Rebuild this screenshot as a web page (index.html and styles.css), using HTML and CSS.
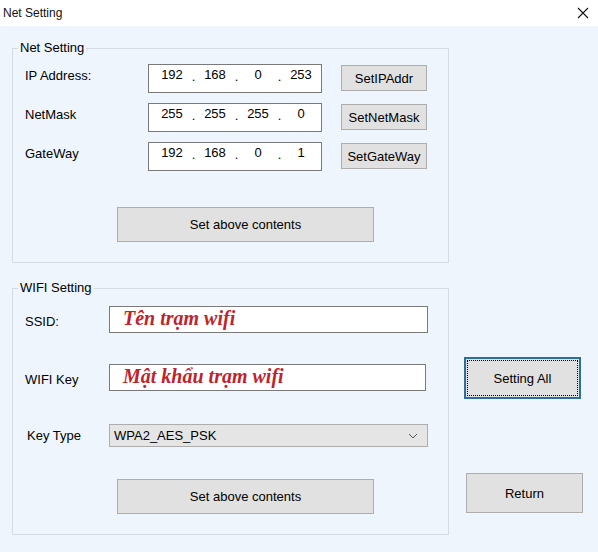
FILE: index.html
```html
<!DOCTYPE html>
<html lang="vi">
<head>
    <meta charset="UTF-8">
    <title>Net Setting</title>
    <link rel="stylesheet" href="styles.css">
</head>
<body>
    <div class="titlebar">
        <span class="title">Net Setting</span>
        <svg class="close" width="12" height="12" viewBox="0 0 12 12">
            <path d="M1 1 L11 11 M11 1 L1 11" stroke="#111" stroke-width="1.1" fill="none"/>
        </svg>
    </div>

    <div class="content">
        <fieldset class="group net">
            <legend>Net Setting</legend>

            <div class="ip-row">
                <div class="label">IP Address:</div>
                <div class="ip-box">
                    <span class="seg">192</span><span class="dot">.</span>
                    <span class="seg">168</span><span class="dot">.</span>
                    <span class="seg">0</span><span class="dot">.</span>
                    <span class="seg">253</span>
                </div>
                <div class="btn small">SetIPAddr</div>
            </div>

            <div class="ip-row">
                <div class="label">NetMask</div>
                <div class="ip-box">
                    <span class="seg">255</span><span class="dot">.</span>
                    <span class="seg">255</span><span class="dot">.</span>
                    <span class="seg">255</span><span class="dot">.</span>
                    <span class="seg">0</span>
                </div>
                <div class="btn small">SetNetMask</div>
            </div>

            <div class="ip-row">
                <div class="label">GateWay</div>
                <div class="ip-box">
                    <span class="seg">192</span><span class="dot">.</span>
                    <span class="seg">168</span><span class="dot">.</span>
                    <span class="seg">0</span><span class="dot">.</span>
                    <span class="seg">1</span>
                </div>
                <div class="btn small">SetGateWay</div>
            </div>

            <div class="btn wide net-apply">Set above contents</div>
        </fieldset>

        <div class="bottom">
            <fieldset class="group wifi">
                <legend>WIFI Setting</legend>

                <div class="wifi-row ssid">
                    <div class="label">SSID:</div>
                    <div class="text-box">Tên trạm wifi</div>
                </div>

                <div class="wifi-row key">
                    <div class="label">WIFI Key</div>
                    <div class="text-box short">Mật khẩu trạm wifi</div>
                </div>

                <div class="wifi-row type">
                    <div class="label">Key Type</div>
                    <div class="combo">
                        <span>WPA2_AES_PSK</span>
                        <svg width="10" height="6" viewBox="0 0 10 6">
                            <path d="M1 1 L5 5 L9 1" stroke="#555" stroke-width="1" fill="none"/>
                        </svg>
                    </div>
                </div>

                <div class="btn wide wifi-apply">Set above contents</div>
            </fieldset>

            <div class="side">
                <div class="btn big focused"><span>Setting All</span></div>
                <div class="btn big ret">Return</div>
            </div>
        </div>
    </div>
</body>
</html>
```

FILE: styles.css
```css
body {
    margin: 0;
    width: 598px;
    height: 552px;
    background: #eef5fc;
    font-family: "Liberation Sans", Arial, sans-serif;
    font-size: 13px;
    color: #000;
    overflow: hidden;
}

.titlebar {
    height: 26px;
    background: #fff;
    display: flex;
    align-items: center;
    justify-content: space-between;
    padding: 0 9px 0 3px;
}

.title {
    font-size: 12px;
    color: #111;
}

.content {
    padding: 14px 0 0 12px;
}

.group {
    margin: 0;
    width: 437px;
    box-sizing: border-box;
    border: 1px solid #d5dbe2;
    padding: 8px 0 20px 12px;
}

.group legend {
    margin-left: -7px;
    padding: 0 2px;
    line-height: 16px;
}

.ip-row {
    display: flex;
    align-items: flex-start;
    height: 29px;
}

.ip-row + .ip-row {
    margin-top: 10px;
}

.ip-row .label {
    width: 123px;
    padding-top: 4px;
    line-height: 16px;
}

.ip-box {
    width: 174px;
    height: 29px;
    box-sizing: border-box;
    border: 1px solid #7a7a7a;
    background: #fff;
    display: flex;
    padding: 2px 0 0 6px;
    line-height: 16px;
}

.seg {
    width: 34px;
    text-align: center;
}

.dot {
    width: 9px;
    text-align: center;
    padding-top: 2px;
}

.btn {
    box-sizing: border-box;
    background: #e1e1e1;
    border: 1px solid #adadad;
    display: flex;
    align-items: center;
    justify-content: center;
}

.btn.small {
    width: 86px;
    height: 26px;
    margin: 1px 0 0 19px;
}

.btn.wide {
    width: 257px;
    height: 35px;
    margin-left: 92px;
}

.net-apply {
    margin-top: 36px;
}

.bottom {
    display: flex;
    margin-top: 17px;
}

.wifi {
    padding-top: 10px;
}

.wifi-row {
    display: flex;
    align-items: center;
}

.wifi-row .label {
    width: 84px;
    padding-top: 3px;
}

.key {
    margin-top: 31px;
}

.type {
    margin-top: 33px;
}

.type .label {
    padding-left: 2px;
    width: 82px;
    padding-top: 0;
}

.text-box {
    width: 319px;
    height: 27px;
    box-sizing: border-box;
    border: 1px solid #7a7a7a;
    background: #fff;
    padding-left: 13px;
    font-family: "Liberation Serif", "Times New Roman", serif;
    font-weight: bold;
    font-style: italic;
    font-size: 20px;
    line-height: 23px;
    color: #c0232b;
}

.text-box.short {
    width: 317px;
}

.combo {
    width: 319px;
    height: 23px;
    box-sizing: border-box;
    border: 1px solid #adadad;
    background: #e5e5e5;
    display: flex;
    align-items: center;
    justify-content: space-between;
    padding: 0 9px 0 4px;
}

.wifi-apply {
    margin-top: 32px;
}

.side {
    display: flex;
    flex-direction: column;
    padding-top: 77px;
}

.btn.big {
    width: 117px;
    height: 42px;
    margin-left: 15px;
}

.focused {
    border: 2px solid #2a6f9e;
    padding: 1px;
}

.focused span {
    flex: 1;
    align-self: stretch;
    display: flex;
    align-items: center;
    justify-content: center;
    border: 1px dotted #000;
}

.ret {
    margin-top: 74px;
    margin-left: 17px !important;
    height: 40px !important;
}
```
